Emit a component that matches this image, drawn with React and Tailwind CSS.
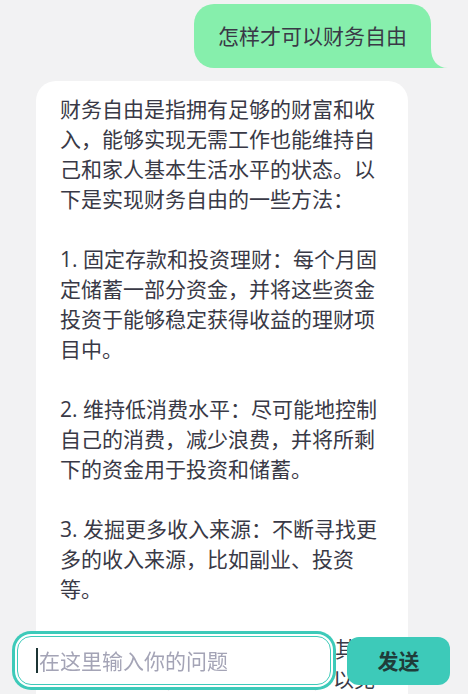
import React from 'react'

const answer = `财务自由是指拥有足够的财富和收入，能够实现无需工作也能维持自己和家人基本生活水平的状态。以下是实现财务自由的一些方法：

1. 固定存款和投资理财：每个月固定储蓄一部分资金，并将这些资金投资于能够稳定获得收益的理财项目中。

2. 维持低消费水平：尽可能地控制自己的消费，减少浪费，并将所剩下的资金用于投资和储蓄。

3. 发掘更多收入来源：不断寻找更多的收入来源，比如副业、投资等。

4. 减少负债：避免高息贷款及其他形式的负债，降低财务风险，以免影响财务自由的实现。`

const App = () => {
    return (
        <div className="min-h-screen bg-[#f2f2f3] font-['Open_Sans','Noto_Sans_CJK_SC',sans-serif] text-[21px] leading-[30px] text-[#393946]">
            <div className="flex flex-col gap-[13px] pt-1 pl-9 pr-[37px] pb-24">

                {/* question */}
                <div className="relative self-end rounded-[20px] rounded-br-none bg-[#86efac] px-6 py-[17px]">
                    怎样才可以财务自由
                    <svg
                        className="absolute bottom-0 right-[-17px] h-[20px] w-[17px]"
                        viewBox="0 0 17 20"
                    >
                        <path d="M0 0 C0 12 6 20 17 20 L0 20 Z" fill="#86efac" />
                    </svg>
                </div>

                {/* answer */}
                <div className="w-[372px] self-start whitespace-pre-line rounded-[20px] bg-white px-6 pt-[13px] pb-6">
                    {answer}
                </div>
            </div>

            {/* input bar */}
            <div className="fixed inset-x-0 bottom-0 flex items-center gap-4 pl-[17px] pr-[18px] pb-[9px]">
                <div className="relative flex-1">
                    <input
                        type="text"
                        placeholder="在这里输入你的问题"
                        className="h-[49px] w-full rounded-[14px] border border-[#3dcab9] bg-white pl-[21px] pr-3 text-[21px] caret-transparent outline-none ring-[3px] ring-[#3dcab9] ring-offset-2 ring-offset-white placeholder:text-[#a4a4b6]"
                    />
                    <span className="pointer-events-none absolute left-[19px] top-[12px] h-[25px] w-[2px] bg-[#1c3434]" />
                </div>
                <button className="h-[48px] w-[103px] rounded-[12px] bg-[#3dcab9] text-[21px] font-bold text-[#1f3d3a]">
                    发送
                </button>
            </div>
        </div>
    )
}

export default App
